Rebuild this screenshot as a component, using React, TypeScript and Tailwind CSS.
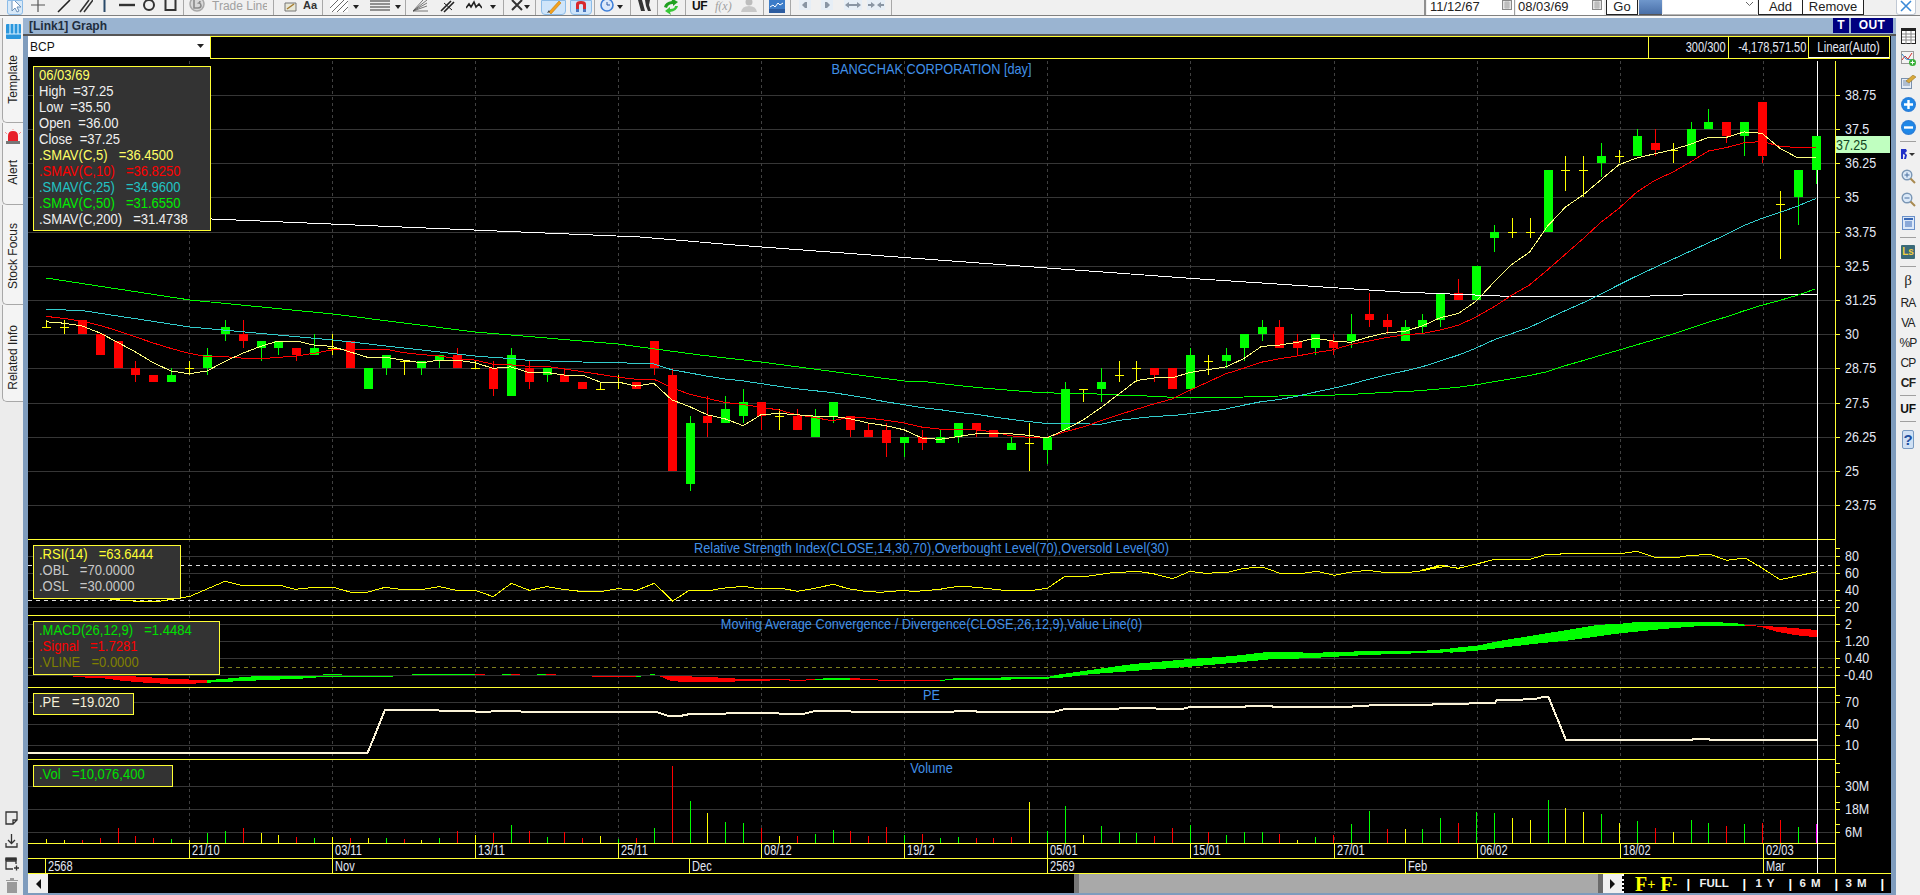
import React from "react";

type Row = [string, number, number, number?, number?];
const D: Row[] = [
  ["y",30.25,30.25,30.5,30.25],["y",30.25,30.25,30.5,30],["r",30.5,30],["r",30,29.25],["r",29.75,28.75],
  ["r",28.75,28.5,29,28.25],["r",28.5,28.25],["g",28.5,28.25,28.75],["y",28.75,28.75,29,28.5],["g",29.25,28.75,29.5,28.5],
  ["g",30.25,30,30.5,29.75],["r",30,29.75,30.5,29.5],["g",29.75,29.5,29.75,29],["g",29.75,29.5,29.75,29.25],["r",29.5,29.25,29.5,29],
  ["g",29.5,29.25,30,29.25],["y",29.5,29.5,30,29.25],["r",29.75,28.75],["g",28.75,28],["g",29.25,28.75,29.25,28.5],
  ["y",29,29,29,28.5],["g",29,28.75,29,28.5],["g",29.25,29,29.25,28.75],["r",29.25,28.75,29.5],["y",28.75,28.75,29,28.75],
  ["r",28.75,28,29,27.75],["g",29.25,27.75,29.5],["r",28.75,28.25,29,28],["g",28.75,28.5,28.75,28.25],["r",28.5,28.25,28.75],
  ["r",28.25,28],["y",28,28,28.25,28],["y",28.25,28.25,28.5,28],["r",28.25,28],["r",29.75,28.75,29.75,28.5],
  ["r",28.5,25,28.75],["g",26.75,24.5,27,24.25],["r",27,26.75,27.75,26.25],["g",27.25,26.75,27.75],["g",27.5,27,28,26.75],
  ["r",27.5,27,27.5,26.5],["y",27,27,27.25,26.5],["r",27,26.5,27.25],["g",27,26.25,27.25],["g",27.5,27,27.5,26.75],
  ["r",27,26.5,27,26.25],["r",26.5,26.25,26.75],["r",26.5,26,26.75,25.5],["g",26.25,26,26.25,25.5],["r",26.25,26,26.5,25.75],
  ["g",26.25,26,26.5],["g",26.75,26.25,26.75,26],["r",26.75,26.5,26.75,26.25],["r",26.5,26.25],["g",26,25.75,26.25],
  ["y",26,26,26.75,25],["g",26.25,25.75,26.25,25.25],["g",28,26.5,28.25],["y",28,28,28,27.5],["g",28.25,28,28.75,27.5],
  ["y",28.5,28.5,29,28.25],["y",28.75,28.75,29,28.25],["r",28.75,28.5,28.75,28.25],["r",28.75,28],["g",29.25,28,29.5],
  ["y",29,29,29.25,28.5],["g",29.25,29,29.5,28.75],["g",30,29.5,30,29],["g",30.25,30,30.5,29.75],["r",30.25,29.5,30.5],
  ["r",29.75,29.5,30,29.25],["g",30,29.5,30,29.25],["r",29.75,29.5,30,29.25],["g",30,29.75,30.75,29.5],["r",30.75,30.5,31.5,30.25],
  ["r",30.5,30.25,30.75,30],["g",30.25,29.75,30.5],["g",30.5,30.25,30.75,30],["g",31.5,30.5,31.5,30.25],["r",31.5,31.25,32],
  ["g",32.5,31.25],["g",33.75,33.5,34,33],["y",33.75,33.75,34.25,33.5],["y",33.75,33.75,34.25,33.5],["g",36,33.75],
  ["y",36,36,36.5,35.25],["y",36,36,36.5,35],["g",36.5,36.25,37,35.75],["y",36.5,36.5,36.75,36.25],["g",37.25,36.5,37.5],
  ["r",37,36.75,37.5,36.5],["y",36.75,36.75,37,36.25],["g",37.5,36.5,37.75],["g",37.75,37.5,38.25],["r",37.75,37.25,37.75,37],
  ["g",37.75,37.25,37.75,36.5],["r",38.5,36.5,38.5,36.25],["y",34.75,34.75,35.25,32.75],["g",36,35,36,34],["g",37.25,36,37.25,35.5],
];
const X = (i: number) => 46 + 17.875 * i;
const PY = (p: number) => 95 + (38.75 - p) * 27.33;
const closes = D.map((d) => (d[0] === "r" ? d[2] : d[1]));
const pre = [31, 31, 30.75, 30.75, 30.75, 30.5, 30.5, 30.5, 30.5];
const all = [...pre, ...closes];
const sma = (n: number, from: number) => {
  const out: [number, number][] = [];
  for (let i = from; i < D.length; i++) {
    const e = i + pre.length;
    let s = 0;
    for (let k = 0; k < n; k++) s += all[e - k];
    out.push([X(i), PY(s / n)]);
  }
  return out;
};
const str = (a: number[][]) => a.map((p) => `${p[0].toFixed(1)},${p[1].toFixed(1)}`).join(" ");
const Z = (x0: number, y0: number, a: number[]) => {
  const o: number[][] = [];
  for (let i = 0; i < a.length; i += 2) o.push([x0 + a[i] / 3, y0 + a[i + 1] / 3]);
  return o;
};

const Y = "#ffff33";
const C = { g: "#00ff00", r: "#ff0000", y: "#ffff00", m: "#ff00ff" } as Record<string, string>;
const VG = [189, 332, 475, 618, 761, 904, 1047, 1190, 1334, 1477, 1620, 1763];

function Plot({
  y0, h, grid, labels, ticks = [], top = true, title, titleY, children,
}: {
  y0: number; h: number; grid: number[]; labels: [string, number][]; ticks?: number[]; top?: boolean;
  title?: string; titleY?: number; children?: React.ReactNode;
}) {
  return (
    <svg width={1863} height={h} viewBox={`28 ${y0} 1863 ${h}`} className="block" shapeRendering="crispEdges">
      {grid.map((g) => <rect key={g} x={28} y={g} width={1807} height={1} fill="#363636" />)}
      {VG.map((v) => <line key={v} x1={v + 0.5} x2={v + 0.5} y1={y0} y2={y0 + h} stroke="#404040" strokeDasharray="3 3" />)}
      {top && <rect x={28} y={y0} width={1807} height={1} fill={Y} />}
      <rect x={1817} y={y0} width={1} height={h} fill="#ffffff" />
      {children}
      <rect x={1835} y={y0} width={1} height={h} fill={Y} />
      {[...grid, ...ticks].map((g) => <rect key={"t" + g} x={1835} y={g} width={5} height={1} fill={Y} />)}
      {labels.map(([t, y]) => (
        <text
          key={t}
          transform={`translate(${t.startsWith("-") ? 1844 : 1845} ${y + 5}) scale(0.89 1)`}
          fill="#e4e8f4"
          className="text-[14px]"
          shapeRendering="auto"
        >
          {t}
        </text>
      ))}
      {title && (
        <text
          transform={`translate(931.5 ${titleY}) scale(0.91 1)`}
          textAnchor="middle"
          fill="#4090e8"
          className="text-[14px]"
          shapeRendering="auto"
        >
          {title}
        </text>
      )}
    </svg>
  );
}

function Candles() {
  return (
    <>
      {D.map((d, i) => {
        const c = Math.round(X(i));
        const col = C[d[0]];
        const t = Math.round(PY(d[1]));
        const b = Math.round(PY(d[2]));
        const hi = Math.round(PY(d[3] ?? d[1]));
        const lo = Math.round(PY(d[4] ?? d[2]));
        return (
          <g key={i}>
            <rect x={c} y={hi} width={1} height={Math.max(lo - hi, 1)} fill={col} />
            <rect x={c - 4} y={t} width={9} height={Math.max(b - t, 1)} fill={col} />
          </g>
        );
      })}
    </>
  );
}

function Legend({ cls, rows }: { cls: string; rows: [string, string, string, string?][] }) {
  return (
    <div className={`absolute left-[5px] border border-[#ffff33] bg-[#333333] pl-[5px] text-[14px] leading-[16px] whitespace-nowrap ${cls}`}>
      {rows.map((r) => (
        <div key={r[0]} className={`origin-left scale-x-[0.93] ${r[3]}`}>
          <span>{r[0]}</span>
          {r[1] && <span className={r[2]}>{r[1]}</span>}
        </div>
      ))}
    </div>
  );
}

const rsi = [
  ...Z(0, 530, [310,205,380,212,465,216,540,204,570,199,675,154,725,166,840,166,885,178,935,173,1000,172,1050,186,1105,186,1155,172,1200,178,1270,178,1318,170,1370,181,1425,181,1440,186]),
  ...Z(480, 530, [0,186,40,200,94,160,148,181,200,170,250,178,300,184,365,184,415,176,470,181,523,160,578,213,628,181,695,181,725,175,790,169,835,176,910,176,953,184,1005,175,1060,163,1105,176,1155,184,1200,187,1260,182,1310,184,1380,178,1400,174]),
  ...Z(950, 530, [0,172,40,169,90,173,160,181,250,181,292,175,345,139,410,139,480,129,560,124,610,131,668,146,720,124,765,130,835,127,880,115,940,112,990,130,1060,130,1100,124,1153,136,1200,127,1250,121,1300,127,1380,127,1425,121,1475,106,1490,109]),
  ...Z(1400, 280, [60,872,120,856,175,865,230,852,285,838,390,838,440,823,580,820,670,820,710,814,765,832,835,832,865,827,930,823,980,841,1035,834,1080,860,1140,899,1252,875]),
];
const pe = [
  ...Z(0, 530, [85,668,1103,668,1155,540,1315,540,1320,543,1425,543,1428,546,1440,546]),
  ...Z(480, 530, [65,543,120,543,125,546,530,546,565,558,600,558,630,552,735,552,740,549,895,549,900,552,970,552,1005,543,1110,543,1115,546,1400,546]),
  ...Z(950, 530, [0,546,25,543,78,543,80,546,310,546,345,537,505,537,510,534,615,534,620,537,695,537,720,531,885,531,890,527,965,527,968,531,1205,531,1210,528,1255,528,1260,525,1445,525,1450,522,1490,522]),
  ...Z(1400, 580, [105,372,205,372,210,368,285,368,290,360,400,358,435,350,445,350,498,480,875,480,880,476,925,476,930,480,1252,480]),
];

const ribbons: [string, number[][]][] = [
  ["r", Z(0,530,[220,438,380,438,435,441,490,445,620,451,620,458,570,462,490,461,435,458,365,452,310,445,220,441])],
  ["g", Z(0,530,[620,451,700,444,770,438,1180,438,1180,440,970,441,900,446,755,452,620,458])],
  ["g", Z(0,530,[970,433,1025,433,1025,435,970,435])],
  ["g", Z(0,530,[1236,433,1425,433,1425,435,1236,435])],
  ["r", Z(0,530,[1425,433,1455,433,1455,435,1425,435])],
  ["g", Z(480,530,[65,433,93,433,93,435,65,435])],
  ["r", Z(480,530,[93,433,120,433,120,435,93,435])],
  ["g", Z(480,530,[172,433,198,433,198,435,172,435])],
  ["r", Z(480,530,[198,433,228,433,228,435,198,435])],
  ["r", Z(480,530,[336,438,468,438,468,441,336,441])],
  ["g", Z(480,530,[468,438,483,438,483,441,468,441])],
  ["g", Z(480,530,[510,433,525,433,525,435,510,435])],
  ["r", Z(480,530,[538,437,600,437,660,441,765,444,765,455,660,456,600,455,570,452,538,438])],
  ["r", Z(480,530,[765,448,870,448,870,453,765,453])],
  ["r", Z(480,530,[870,448,930,448,930,450,870,450])],
  ["r", Z(480,530,[928,449,978,449,978,453,928,453])],
  ["r", Z(480,530,[978,448,1005,448,1005,450,978,450])],
  ["g", Z(480,530,[1005,448,1030,448,1030,450,1005,450])],
  ["g", Z(480,530,[1030,444,1110,444,1110,449,1030,449])],
  ["r", Z(480,530,[1110,444,1140,444,1140,449,1110,449])],
  ["r", Z(480,530,[1140,448,1195,448,1195,450,1140,450])],
  ["r", Z(480,530,[1195,449,1380,449,1380,453,1195,453])],
  ["g", Z(480,530,[1380,449,1395,449,1395,453,1380,453])],
  ["g", Z(480,530,[1395,448,1420,448,1420,450,1395,450])],
  ["g", Z(480,530,[1420,444,1500,444,1500,450,1420,450])],
  ["g", Z(950,530,[0,447,100,443,292,441,330,433,420,420,550,402,720,387,850,378,950,366,1100,368,1230,364,1400,364,1500,356,1500,367,1400,370,1250,375,1070,385,960,388,855,398,720,410,520,425,420,433,320,445,160,449,0,449])],
  ["g", Z(1400,580,[150,205,230,197,310,181,440,160,590,135,680,130,700,127,960,127,1010,130,1035,134,1035,137,900,138,800,146,660,160,500,182,400,192,230,212,150,218])],
  ["r", Z(1400,580,[1035,135,1100,138,1180,144,1252,150,1252,172,1190,166,1130,155,1080,140,1035,137])],
];

const V: [string, number][] = [
  ["y",4],["y",3],["r",3],["r",5],["r",15],["r",7],["r",5],["g",4],["y",3],["g",10],
  ["g",12],["r",15],["y",10],["y",8],["r",6],["g",5],["y",6],["r",5],["y",5],["g",5],
  ["r",4],["y",3],["g",5],["r",12],["y",8],["r",10],["g",18],["r",12],["g",6],["r",11],
  ["r",5],["y",7],["g",4],["r",5],["g",15],["r",77],["g",42],["y",30],["g",21],["g",20],
  ["r",15],["y",7],["r",7],["g",9],["g",13],["r",12],["r",7],["r",16],["g",8],["r",9],
  ["g",5],["g",6],["r",5],["r",5],["r",6],["y",41],["g",12],["g",37],["y",8],["g",17],
  ["g",11],["g",10],["r",7],["r",15],["g",18],["r",11],["g",8],["g",11],["g",11],["r",9],
  ["y",3],["g",6],["r",8],["g",19],["g",32],["r",14],["y",14],["g",14],["g",25],["r",20],
  ["g",31],["g",30],["y",25],["y",23],["g",43],["y",35],["y",31],["g",29],["y",20],["g",22],
  ["r",15],["y",11],["g",23],["g",20],["r",17],["g",19],["r",20],["r",23],["g",16],["m",19],
];

function Tri({ cls = "" }: { cls?: string }) {
  return (
    <svg className={`h-[16px] w-[8px] shrink-0 ${cls}`}><path d="M1 5h6l-3 4z" fill="#222" /></svg>
  );
}
function Sep({ cls }: { cls: string }) {
  return <div className={`h-[15px] w-px shrink-0 bg-[#a8a8a8] ${cls}`} />;
}
function RSep({ cls = "" }: { cls?: string }) {
  return <div className={`h-px w-[16px] bg-[#a0a0a0] ${cls}`} />;
}

function Toolbar() {
  return (
    <div className="h-[18px] bg-[#f0f0f0]">
      <div className="flex h-[16px] items-start overflow-hidden border-b border-[#808080]">
        <div className="flex h-[16px] w-[1424px] shrink-0 items-start">
          <div className="ml-[7px] h-[15px] w-[16px] shrink-0 rounded-b-[3px] border border-[#8cbce8] bg-[#d8e9f8]">
            <svg className="h-[13px] w-[14px]"><path d="M4 -3v13l3-3 2 4 2-1-2-4h4z" fill="#fff" stroke="#6a90b8" /></svg>
          </div>
          <svg className="ml-[8px] h-[16px] w-[14px] shrink-0"><path d="M7 0v12M0 5h14" stroke="#555" strokeWidth="1.2" /></svg>
          <svg className="ml-[12px] h-[16px] w-[14px] shrink-0"><path d="M1 12 13 0" stroke="#222" strokeWidth="1.6" /></svg>
          <svg className="ml-[8px] h-[16px] w-[14px] shrink-0"><path d="M1 12 10 0M5 12 14 0" stroke="#333" strokeWidth="1.6" /></svg>
          <svg className="ml-[8px] h-[16px] w-[6px] shrink-0"><path d="M3.5 0v12" stroke="#2a4a6a" strokeWidth="2" /></svg>
          <svg className="ml-[12px] h-[16px] w-[16px] shrink-0"><path d="M0 5h16" stroke="#333" strokeWidth="2.4" /></svg>
          <svg className="ml-[7px] h-[16px] w-[14px] shrink-0"><circle cx="7" cy="5" r="5" fill="none" stroke="#333" strokeWidth="2" /></svg>
          <svg className="ml-[8px] h-[16px] w-[13px] shrink-0"><path d="M1.5 -3h10v13h-10z" fill="none" stroke="#333" strokeWidth="2" /></svg>
          <Sep cls="ml-[6px]" />
          <svg className="ml-[5px] h-[16px] w-[16px] shrink-0">
            <circle cx="8" cy="4" r="7" fill="#d8d8d8" stroke="#a8a8a8" strokeWidth="1.5" />
            <path d="M5 -1v9h4q3 0 3-2.500 0-2-2-2.500 1-.5 1-2" fill="none" stroke="#8a8a8a" strokeWidth="1.6" />
          </svg>
          <span className="ml-[4px] w-[58px] shrink-0 overflow-hidden whitespace-nowrap pl-[3px] text-[12px] leading-[13px] text-[#a0a0a0]">Trade Line</span>
          <Sep cls="ml-[6px]" />
          <svg className="ml-[10px] h-[16px] w-[13px] shrink-0">
            <path d="M1 3h11v8H1z" fill="#e8e8d8" stroke="#777" /><path d="M3 9l7-5" stroke="#a67c2e" strokeWidth="1.5" />
          </svg>
          <span className="ml-[6px] w-[13px] shrink-0 text-[11px] font-bold leading-[11px] text-[#333]">Aa</span>
          <Sep cls="ml-[6px]" />
          <svg className="ml-[7px] h-[16px] w-[18px] shrink-0">
            <rect x="0" y="0" width="18" height="12" fill="#fff" />
            <path d="M0 8 8 0M2 12 14 0M7 12 18 1M13 12 18 7" stroke="#444" strokeWidth="0.8" />
          </svg>
          <Tri cls="ml-[4px]" />
          <svg className="ml-[10px] h-[16px] w-[20px] shrink-0"><path d="M0 1h20M0 4h20M0 7h20M0 10h20" stroke="#333" strokeWidth="1" /></svg>
          <Tri cls="ml-[4px]" />
          <Sep cls="ml-[3px]" />
          <svg className="ml-[7px] h-[16px] w-[15px] shrink-0"><path d="M0 11 14 0M0 11 14 3M0 11 14 6M0 11h15M0 11 10 0" stroke="#555" strokeWidth="0.8" /></svg>
          <svg className="ml-[12px] h-[16px] w-[15px] shrink-0"><path d="M1 11 11 1M4 12 14 2" stroke="#222" strokeWidth="1.6" /><path d="M4 3l8 7" stroke="#222" strokeWidth="1" /></svg>
          <svg className="ml-[11px] h-[16px] w-[16px] shrink-0"><path d="M0 8l3-4 2 3 3-5 2 5 3-3 3 4" fill="none" stroke="#222" strokeWidth="1.6" /></svg>
          <Tri cls="ml-[7px]" />
          <Sep cls="ml-[6px]" />
          <svg className="ml-[7px] h-[16px] w-[12px] shrink-0"><path d="M1 0 11 10M11 0 1 10" stroke="#333" strokeWidth="2" /></svg>
          <Tri />
          <Sep cls="ml-[4px]" />
          <div className="ml-[5px] h-[15px] w-[25px] shrink-0 rounded-b-[4px] border border-[#8cbce8] bg-[#cfe5fa]">
            <svg className="h-[13px] w-[23px]"><path d="M7 11 17 0l2 2-10 11z" fill="#f4a21c" stroke="#c07a10" strokeWidth="0.6" /><path d="M5 12l3-1-1-2z" fill="#444" /></svg>
          </div>
          <div className="ml-[4px] h-[15px] w-[22px] shrink-0 rounded-b-[4px] border border-[#8cbce8] bg-[#cfe5fa]">
            <svg className="h-[13px] w-[20px]"><path d="M5 11V3q0-3 5-3t5 3v8h-3V4q0-1-2-1T8 4v7z" fill="#d8282c" /><path d="M5 8h3v3H5zM12 8h3v3h-3z" fill="#4a78c0" /></svg>
          </div>
          <Sep cls="ml-[2px]" />
          <svg className="ml-[5px] h-[16px] w-[14px] shrink-0">
            <circle cx="7" cy="5" r="6" fill="#dce9fa" stroke="#3e7fd8" strokeWidth="1.6" /><path d="M7 2v3h3" fill="none" stroke="#2a5aa8" />
          </svg>
          <Tri cls="ml-[2px]" />
          <Sep cls="ml-[6px]" />
          <svg className="ml-[6px] h-[16px] w-[14px] shrink-0"><path d="M1 0h4l3 11H4zM8 0h5l-1 5 2 6h-3L9 6z" fill="#333" /></svg>
          <Sep cls="ml-[6px]" />
          <svg className="ml-[4px] h-[16px] w-[18px] shrink-0">
            <path d="M2 7q1-5 8-6l-1-3 7 4-5 4v-2q-5 0-6 4z" fill="#20a020" />
            <path d="M16 6q-1 5-8 6l1 3-6-4 5-4v2q5 0 5-3z" fill="#38c838" />
          </svg>
          <Sep cls="ml-[5px]" />
          <span className="ml-[6px] w-[16px] shrink-0 text-[12px] font-bold leading-[12px] tracking-[-0.5px] text-[#111]">UF</span>
          <span className="ml-[7px] w-[20px] shrink-0 font-['Liberation_Serif'] text-[12px] italic leading-[12px] text-[#a0a0a0]">f(x)</span>
          <svg className="ml-[5px] h-[16px] w-[18px] shrink-0"><circle cx="9" cy="2" r="3.500" fill="#bdbdbd" /><path d="M1 12q1-6 8-6t8 6z" fill="#c8c8c8" /></svg>
          <Sep cls="ml-[5px]" />
          <svg className="ml-[5px] h-[16px] w-[16px] shrink-0">
            <rect x="0" y="0" width="16" height="13" fill="#3c7cc8" />
            <path d="M1 7l3-2 2 2 3-4 2 2 3-2" fill="none" stroke="#fff" /><rect x="0" y="9" width="16" height="4" fill="#2c5ca0" />
          </svg>
          <Sep cls="ml-[5px]" />
          <svg className="ml-[8px] h-[16px] w-[12px] shrink-0"><rect x="0" y="0" width="12" height="10" fill="#e6eef6" /><path d="M3 5l3-3h2v6H6z" fill="#8a96a4" /></svg>
          <svg className="ml-[10px] h-[16px] w-[12px] shrink-0"><rect x="0" y="0" width="12" height="10" fill="#e6eef6" /><path d="M9 5 6 2H4v6h2z" fill="#8a96a4" /></svg>
          <svg className="ml-[11px] h-[16px] w-[18px] shrink-0"><rect x="0" y="0" width="18" height="10" fill="#e6eef6" /><path d="M1 5l4-3v6zM17 5l-4-3v6zM5 4h8v2H5z" fill="#8a96a4" /></svg>
          <svg className="ml-[5px] h-[16px] w-[18px] shrink-0"><rect x="0" y="0" width="18" height="10" fill="#e6eef6" /><path d="M8 5 4 2v2H1v2h3v2zM10 5l4-3v2h3v2h-3v2z" fill="#8a96a4" /></svg>
          <Sep cls="ml-[6px]" />
        </div>
        <div className="flex h-[16px] w-[496px] shrink-0 items-start text-[13px] leading-[13px] text-[#222]">
          <div className="h-[15px] w-[2px] bg-[#909090]" />
          <div className="ml-[1px] flex h-[15px] w-[88px] items-start justify-between border-r border-[#a0a0a0] bg-white pl-[3px]">
            <span>11/12/67</span>
            <svg className="mr-[2px] h-[11px] w-[10px]"><rect x="0.500" y="0.500" width="9" height="9" fill="#e4e4e4" stroke="#888" /><path d="M2 3h6M2 5h6M2 7h6M4 1v8M6 1v8" stroke="#999" strokeWidth="0.6" /></svg>
          </div>
          <div className="ml-[1px] flex h-[15px] w-[88px] items-start justify-between bg-white pl-[2px]">
            <span>08/03/69</span>
            <svg className="mr-[2px] h-[11px] w-[10px]"><rect x="0.500" y="0.500" width="9" height="9" fill="#e4e4e4" stroke="#888" /><path d="M2 3h6M2 5h6M2 7h6M4 1v8M6 1v8" stroke="#999" strokeWidth="0.6" /></svg>
          </div>
          <div className="ml-[2px] h-[15px] w-[32px] border-x border-b border-[#222] bg-white text-center">Go</div>
          <div className="ml-[1px] h-[15px] w-[23px] border-b border-[#555] bg-gradient-to-b from-[#6f97cc] to-[#4a70a8]" />
          <div className="ml-[1px] flex h-[15px] w-[94px] items-start justify-end border-b border-[#b8b8b8] bg-white pr-[3px]">
            <svg className="h-[8px] w-[9px]"><path d="M1 2l3.500 3.500L8 2" fill="none" stroke="#666" /></svg>
          </div>
          <div className="ml-[1px] h-[15px] w-[45px] border-x border-b border-[#222] bg-white text-center">Add</div>
          <div className="h-[15px] w-[61px] border-r border-b border-[#222] bg-white text-center">Remove</div>
          <div className="ml-[32px] h-[15px] w-[20px] rounded-b-[3px] border-x border-b border-[#c0c8d4] bg-white">
            <svg className="h-[13px] w-[18px]"><path d="M4 1l10 10M14 1 4 11" stroke="#3a8ad8" strokeWidth="1.600" /></svg>
          </div>
        </div>
      </div>
      <div className="h-[2px] bg-[#f8f8f8]" />
    </div>
  );
}

function LeftTabs() {
  const tab = "ml-[2px] flex w-[21px] flex-col items-center rounded-bl-[5px] border-l border-b border-[#a8a8a8] bg-[#f4f4f4]";
  const txt = "[writing-mode:vertical-rl] rotate-180 text-[12px] leading-[14px] text-[#222]";
  return (
    <div className="flex w-[23px] shrink-0 flex-col bg-[#ececec]">
      <div className={`${tab} h-[105px] pt-[6px]`}>
        <svg className="h-[15px] w-[15px]" viewBox="0 0 15 15">
          <rect width="15" height="15" fill="#2a96dc" rx="1" />
          <path d="M0 10h15M4 0v10M8 0v10M12 0v10" stroke="#d8f0ff" strokeWidth="1.200" />
        </svg>
        <span className={`${txt} mt-[16px]`}>Template</span>
      </div>
      <div className={`${tab} h-[82px] pt-[6px]`}>
        <svg className="h-[15px] w-[16px]" viewBox="0 0 16 15">
          <path d="M3 13V7q0-5 5-5t5 5v6z" fill="#e8202a" /><rect x="1" y="12" width="14" height="3" fill="#777" /><path d="M0 3l2 2M16 3l-2 2M8 0v1" stroke="#f49090" />
        </svg>
        <span className={`${txt} mt-[16px]`}>Alert</span>
      </div>
      <div className={`${tab} h-[100px] pt-[18px]`}><span className={txt}>Stock Focus</span></div>
      <div className={`${tab} h-[97px] pt-[20px]`}><span className={txt}>Related Info</span></div>
      <div className="mt-auto flex flex-col items-center text-[#333]">
        <div className="flex h-[23px] items-center">
          <svg className="h-[14px] w-[13px]" viewBox="0 0 13 14" fill="none" stroke="#333" strokeWidth="1.300"><path d="M1 1h11v8l-4 4H1zM12 9H8v4" /></svg>
        </div>
        <div className="flex h-[23px] items-center">
          <svg className="h-[14px] w-[13px]" viewBox="0 0 13 14" fill="none" stroke="#333" strokeWidth="1.300"><path d="M6.500 0v9M3 6l3.500 3.500L10 6M1 9v4h11V9" /></svg>
        </div>
        <div className="flex h-[23px] items-center">
          <svg className="h-[14px] w-[14px]" viewBox="0 0 14 14" fill="none" stroke="#333" strokeWidth="1.300"><path d="M8 12H1V2h10v5M1 4h10M9 11h5M11.500 8.500v5" /><rect x="1" y="1" width="10" height="2" fill="#333" /></svg>
        </div>
        <div className="flex h-[20px] items-center">
          <svg className="h-[15px] w-[12px]" viewBox="0 0 12 15"><path d="M0 2h12v1H0zM4 0h4v2H4zM1 4h10v11H1z" fill="#9a9a9a" /></svg>
        </div>
      </div>
    </div>
  );
}

function RightTools() {
  const row = "flex h-[23px] items-center justify-center";
  const tx = "flex h-[20px] items-center justify-center text-[12px] tracking-[-0.8px] text-[#222]";
  const mag = (plus: boolean) => (
    <svg className="h-[15px] w-[15px]" viewBox="0 0 15 15">
      <circle cx="6" cy="6" r="4.800" fill="#dbe9f8" stroke="#7a96b4" strokeWidth="1.400" />
      <path d="M9.500 9.500 14 14" stroke="#a88a50" strokeWidth="2" />
      <path d={plus ? "M3.500 6h5M6 3.500v5" : "M3.500 6h5"} stroke="#4a70a0" />
    </svg>
  );
  return (
    <div className="flex w-[24px] shrink-0 flex-col items-center bg-[#f0f0f0] pt-[6px]">
      <div className={`${row} w-full`}>
        <svg className="h-[16px] w-[15px]" viewBox="0 0 15 16">
          <rect x="0.500" y="0.500" width="14" height="15" fill="#fff" stroke="#222" />
          <rect x="1" y="1" width="13" height="2" fill="#222" />
          <path d="M1 6h13M1 9h13M1 12h13M5 3v13M10 3v13" stroke="#888" />
        </svg>
      </div>
      <div className={`${row} w-full`}>
        <svg className="h-[15px] w-[15px]" viewBox="0 0 15 15">
          <rect x="0.500" y="0.500" width="12" height="12" fill="#f4f4f4" stroke="#999" />
          <path d="M1 9l3-4 3 3 4-6" fill="none" stroke="#d03030" /><path d="M1 3l4 5 6 1" fill="none" stroke="#3080c0" />
          <circle cx="11.500" cy="11.500" r="3.500" fill="#38b038" /><path d="M9.500 11.500h4M11.500 9.500v4" stroke="#fff" />
        </svg>
      </div>
      <div className={`${row} w-full`}>
        <svg className="h-[14px] w-[15px]" viewBox="0 0 15 14">
          <rect x="0.500" y="3.500" width="10" height="10" fill="#e4ecf6" stroke="#7a90ac" />
          <path d="M2 6h7M2 8h7M2 10h7" stroke="#7a90ac" /><path d="M5 6 12 0l3 2-7 6z" fill="#d8a83a" stroke="#8a6a20" strokeWidth="0.500" />
        </svg>
      </div>
      <div className={`${row} w-full`}>
        <svg className="h-[15px] w-[15px]" viewBox="0 0 15 15"><circle cx="7.500" cy="7.500" r="7.500" fill="#2a7ed8" /><circle cx="7.500" cy="7.500" r="6" fill="#1e88e8" /><path d="M3 7.500h9M7.500 3v9" stroke="#fff" strokeWidth="2.400" /></svg>
      </div>
      <div className={`${row} w-full`}>
        <svg className="h-[15px] w-[15px]" viewBox="0 0 15 15"><circle cx="7.500" cy="7.500" r="7.500" fill="#2a7ed8" /><circle cx="7.500" cy="7.500" r="6" fill="#1e88e8" /><path d="M3 7.500h9" stroke="#fff" strokeWidth="2.400" /></svg>
      </div>
      <RSep cls="mt-[2px]" />
      <div className={`${row} w-full`}>
        <svg className="h-[10px] w-[14px]" viewBox="0 0 14 10">
          <path d="M0 0h2v10H0zM2 0h3l1 2-2 2 2 2-1 4H3l1-4-2-1z" fill="#2030c8" /><path d="M8 4h6l-3 3z" fill="#333" />
        </svg>
      </div>
      <div className={`${row} w-full`}>{mag(true)}</div>
      <div className={`${row} w-full`}>{mag(false)}</div>
      <div className={`${row} w-full`}>
        <svg className="h-[14px] w-[13px]" viewBox="0 0 13 14"><rect x="0.500" y="0.500" width="12" height="13" fill="#dce8f8" stroke="#6a90c8" /><rect x="2" y="2" width="9" height="2" fill="#3a6ab8" /><path d="M3 6h7M3 8h7M3 10h7" stroke="#3a6ab8" /></svg>
      </div>
      <RSep cls="mt-[3px]" />
      <div className="flex h-[28px] w-full items-center justify-center">
        <div className="flex h-[14px] w-[14px] items-center justify-center rounded-[1px] bg-[#3a6a78] text-[10px] font-bold leading-[14px] text-[#f0d040]">Ls</div>
      </div>
      <RSep />
      <div className="flex h-[26px] w-full items-center justify-center font-['Liberation_Serif'] text-[15px] text-[#222]">β</div>
      <div className={`${tx} w-full`}>RA</div>
      <div className={`${tx} w-full`}>VA</div>
      <div className={`${tx} w-full`}>%P</div>
      <div className={`${tx} w-full`}>CP</div>
      <div className={`${tx} w-full font-bold text-[#3a6fe8]`}>CF</div>
      <RSep cls="mt-[2px]" />
      <div className="flex h-[25px] w-full items-center justify-center text-[12px] font-bold tracking-[-0.3px] text-[#111]">UF</div>
      <RSep />
      <div className="mt-[8px] flex h-[19px] w-[12px] items-center justify-center rounded-[2px] border border-[#7a9ac0] bg-[#cfe0f4] text-[15px] font-bold leading-[15px] text-[#1f4fa0]">?</div>
    </div>
  );
}

function DateRows() {
  const r1: [string, number][] = [["21/10",189],["03/11",332],["13/11",475],["25/11",618],["08/12",761],["19/12",904],["05/01",1047],["15/01",1190],["27/01",1334],["06/02",1477],["18/02",1620],["02/03",1763]];
  const r2: [string, number][] = [["2568",45],["Nov",332],["Dec",689],["2569",1047],["Feb",1405],["Mar",1763]];
  return (
    <svg width={1863} height={30} viewBox="28 843 1863 30" className="block" shapeRendering="crispEdges">
      <rect x={28} y={843} width={1807} height={1} fill={Y} />
      <rect x={28} y={858} width={1807} height={1} fill={Y} />
      <rect x={1817} y={843} width={1} height={30} fill="#fff" />
      <rect x={1835} y={843} width={1} height={30} fill={Y} />
      {r1.map(([t, x]) => (
        <g key={t}>
          <rect x={x} y={843} width={1} height={15} fill={Y} />
          <text transform={`translate(${x + 3} 855) scale(0.79 1)`} fill="#e4e8f4" className="text-[14px]" shapeRendering="auto">{t}</text>
        </g>
      ))}
      {r2.map(([t, x]) => (
        <g key={t}>
          <rect x={x} y={858} width={1} height={15} fill={Y} />
          <text transform={`translate(${x + 3} 871) scale(0.79 1)`} fill="#e4e8f4" className="text-[14px]" shapeRendering="auto">{t}</text>
        </g>
      ))}
    </svg>
  );
}

function BottomBar() {
  const pipe = "text-[13px] font-bold leading-none text-white";
  const lab = "text-[11.500px] font-bold text-[#f0f0f0]";
  return (
    <div className="flex h-[20px] border-t border-[#ffff33] bg-black">
      <div className="flex w-[20px] items-center justify-center bg-[#f0f0f0]">
        <svg className="h-[12px] w-[7px]"><path d="M6 1v10L1 6z" fill="#111" /></svg>
      </div>
      <div className="w-[1026px]" />
      <div className="w-[5px] bg-[#777777]" />
      <div className="w-[519px] bg-[#a9a9a9]" />
      <div className="w-[5px] bg-[#6a6a6a]" />
      <div className="flex w-[19px] items-center justify-center bg-[#f0f0f0]">
        <svg className="h-[12px] w-[7px]"><path d="M1 1v10l5-5z" fill="#111" /></svg>
      </div>
      <div className="flex w-[269px] items-center border-l-2 border-dotted border-white">
        <span className="ml-[11px] font-['Liberation_Serif'] text-[20px] font-bold leading-none text-[#ffff00]">F</span>
        <span className="w-[11px] text-[14px] leading-none text-[#ffff00]">+</span>
        <span className="ml-[2px] font-['Liberation_Serif'] text-[20px] font-bold leading-none text-[#ffff00]">F</span>
        <span className="w-[11px] text-[14px] leading-none text-[#ffff00]">-</span>
        <span className={`${pipe} ml-[3px] w-[4px]`}>|</span>
        <span className={`${lab} ml-[9px] w-[33px]`}>FULL</span>
        <span className={`${pipe} ml-[10px] w-[4px]`}>|</span>
        <span className={`${lab} ml-[9px] w-[26px] tracking-[1px]`}>1 Y</span>
        <span className={`${pipe} ml-[7px] w-[4px]`}>|</span>
        <span className={`${lab} ml-[7px] w-[29px] tracking-[1px]`}>6 M</span>
        <span className={`${pipe} ml-[6px] w-[4px]`}>|</span>
        <span className={`${lab} ml-[7px] w-[29px] tracking-[1px]`}>3 M</span>
        <span className={`${pipe} ml-[6px] w-[4px]`}>|</span>
      </div>
    </div>
  );
}

export default function App() {
  const s5 = sma(5, 0);
  const s10 = sma(10, 0);
  const s25 = [[46,309],[85,311],[190,327],[333,340],[475,356],...sma(25, 25)];
  const s50 = [[46,278],[59,280],[190,300],[333,314],[475,332],[618,344],[700,355],[761,362],[904,381],...sma(50, 49)];
  const s200 = [[46,216],[212,219],[640,237],[735,245],[1047,268],[1200,279],[1400,292],[1500,296],[1650,296],[1700,294.500],[1817,294]];
  const L = (l: string, p: number): [string, number] => [l, p];
  return (
    <div className="flex h-[895px] w-[1920px] flex-col overflow-hidden bg-[#f0f0f0] font-['Liberation_Sans',Arial,sans-serif]">
      <Toolbar />
      <div className="flex min-h-0 flex-1">
        <LeftTabs />
        <div className="flex w-[1873px] flex-col">
          <div className="flex h-[16px] items-start justify-between bg-[#9ab4d1] pl-[6px] pr-[3px]">
            <span className="text-[12px] font-bold leading-[16px] text-[#1f2d3d]">[Link1] Graph</span>
            <div className="flex gap-[2px] text-[12px] font-bold leading-[15px] text-white">
              <div className="h-[15px] w-[16px] bg-[#000080] text-center">T</div>
              <div className="h-[15px] w-[42px] bg-[#000080] text-center tracking-[0.4px]">OUT</div>
            </div>
          </div>
          <div className="h-[2px] bg-[#555555]" />
          <div className="flex h-[859px] flex-col border-x-[5px] border-b-2 border-[#7f9cbd] bg-black">
            <div className="flex h-[23px] shrink-0">
              <div className="flex h-[21px] w-[182px] items-center justify-between bg-white pl-[2px] pr-[6px] text-[12px] text-[#111]">
                <span>BCP</span>
                <svg className="h-[5px] w-[7px]"><path d="M0 0h7L3.500 4z" fill="#222" /></svg>
              </div>
              <div className="flex h-[23px] w-[1680px] items-center border border-[#ffff33] text-[14px] leading-[21px] text-[#e4e8f4]">
                <div className="w-[1437px]" />
                <div className="h-full w-[80px] border-l border-[#ffff33] pr-[2px] text-right"><span className="inline-block origin-right scale-x-[0.79]">300/300</span></div>
                <div className="flex h-full w-[80px] justify-end border-l border-[#ffff33] pr-[2px]"><span className="inline-block shrink-0 origin-right scale-x-[0.79] whitespace-nowrap">-4,178,571.50</span></div>
                <div className="flex h-full w-[81px] justify-center border-l border-b border-[#ffff33] border-b-white"><span className="inline-block shrink-0 scale-x-[0.81] whitespace-nowrap">Linear(Auto)</span></div>
              </div>
            </div>
            <div className="h-[2px] shrink-0" />
            <div className="relative shrink-0">
              <Plot
                y0={61} h={478} top={false}
                grid={[95,129,163,197,232,266,300,334,368,403,437,471,505]}
                labels={[L("38.75",95),L("37.5",129),L("36.25",163),L("35",197),L("33.75",232),L("32.5",266),L("31.25",300),L("30",334),L("28.75",368),L("27.5",403),L("26.25",437),L("25",471),L("23.75",505)]}
                title="BANGCHAK CORPORATION [day]" titleY={74}
              >
                <Candles />
                <polyline points={str(s200)} fill="none" stroke="#ffffff" />
                <polyline points={str(s50)} fill="none" stroke="#00ff00" />
                <polyline points={str(s25)} fill="none" stroke="#33cccc" />
                <polyline points={str(s10)} fill="none" stroke="#ff0000" />
                <polyline points={str(s5)} fill="none" stroke="#ffff80" />
                <rect x={1835} y={136} width={55} height={17} fill="#c0ffc0" />
                <text transform="translate(1836 150) scale(0.89 1)" fill="#114422" className="text-[14px]" shapeRendering="auto">37.25</text>
              </Plot>
              <Legend
                cls="top-[5px] h-[165px] w-[178px]"
                rows={[
                  ["06/03/69","","","text-[#ffff66]"],
                  ["High","=37.25","ml-[8px]","text-[#f0f0f0]"],
                  ["Low","=35.50","ml-[8px]","text-[#f0f0f0]"],
                  ["Open","=36.00","ml-[8px]","text-[#f0f0f0]"],
                  ["Close","=37.25","ml-[8px]","text-[#f0f0f0]"],
                  [".SMAV(C,5)","=36.4500","ml-[12px]","text-[#ffff66]"],
                  [".SMAV(C,10)","=36.8250","ml-[12px]","text-[#ff0000]"],
                  [".SMAV(C,25)","=34.9600","ml-[12px]","text-[#22c4c4]"],
                  [".SMAV(C,50)","=31.6550","ml-[12px]","text-[#00ee00]"],
                  [".SMAV(C,200)","=31.4738","ml-[12px]","text-[#f0f0f0]"],
                ]}
              />
            </div>
            <div className="relative shrink-0">
              <Plot
                y0={539} h={76}
                grid={[556,573,590,607]} ticks={[548,565,600]}
                labels={[L("80",556),L("60",573),L("40",590),L("20",607)]}
                title="Relative Strength Index(CLOSE,14,30,70),Overbought Level(70),Oversold Level(30)" titleY={553}
              >
                <line x1={28} x2={1835} y1={565.5} y2={565.5} stroke="#dddddd" strokeDasharray="4 4" />
                <line x1={28} x2={1835} y1={600.5} y2={600.5} stroke="#dddddd" strokeDasharray="4 4" />
                <polyline points={str(rsi)} fill="none" stroke="#ffff00" />
              </Plot>
              <Legend
                cls="top-[6px] h-[54px] w-[148px]"
                rows={[
                  [".RSI(14)","=63.6444","ml-[12px]","text-[#ffff33]"],
                  [".OBL","=70.0000","ml-[12px]","text-[#c8c8c8]"],
                  [".OSL","=30.0000","ml-[12px]","text-[#c8c8c8]"],
                ]}
              />
            </div>
            <div className="relative shrink-0">
              <Plot
                y0={615} h={72}
                grid={[624,641,658,675]} ticks={[667]}
                labels={[L("2",624),L("1.20",641),L("0.40",658),L("-0.40",675)]}
                title="Moving Average Convergence / Divergence(CLOSE,26,12,9),Value Line(0)" titleY={629}
              >
                <line x1={28} x2={1835} y1={667.5} y2={667.5} stroke="#808020" strokeDasharray="4 4" />
                {ribbons.map(([c, p], i) => <polygon key={i} points={str(p)} fill={C[c]} />)}
              </Plot>
              <Legend
                cls="top-[6px] h-[54px] w-[187px]"
                rows={[
                  [".MACD(26,12,9)","=1.4484","ml-[12px]","text-[#00e000]"],
                  [".Signal","=1.7281","ml-[12px]","text-[#ff0000]"],
                  [".VLINE","=0.0000","ml-[12px]","text-[#808000]"],
                ]}
              />
            </div>
            <div className="relative shrink-0">
              <Plot y0={687} h={72} grid={[702,724,745]} ticks={[695,735]} labels={[L("70",702),L("40",724),L("10",745)]} title="PE" titleY={700}>
                <polyline points={str(pe)} fill="none" stroke="#fbf3d8" strokeWidth={2} />
              </Plot>
              <Legend cls="top-[6px] h-[22px] w-[101px]" rows={[[".PE","=19.020","ml-[13px]","text-[#f5efd8]"]]} />
            </div>
            <div className="relative shrink-0">
              <Plot y0={759} h={84} grid={[786,809,832]} ticks={[763,772,802,824]} labels={[L("30M",786),L("18M",809),L("6M",832)]} title="Volume" titleY={773}>
                {V.map(([c, h], i) => (
                  <rect key={i} x={Math.round(X(i))} y={843 - h} width={1} height={h} fill={C[c]} />
                ))}
              </Plot>
              <Legend cls="top-[6px] h-[22px] w-[140px]" rows={[[".Vol","=10,076,400","ml-[12px]","text-[#00e000]"]]} />
            </div>
            <DateRows />
            <BottomBar />
          </div>
        </div>
        <RightTools />
      </div>
    </div>
  );
}
